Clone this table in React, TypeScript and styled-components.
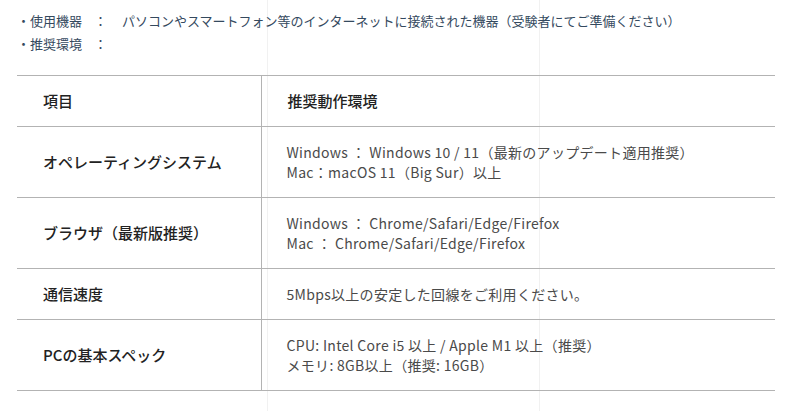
import styled, { createGlobalStyle } from "styled-components";

const GlobalStyle = createGlobalStyle`
    html, body {
        margin: 0;
        padding: 0;
    }

    body {
        font-family: "Noto Sans CJK JP", "Noto Sans", sans-serif;
        background-color: #fff;
        background-image:
            linear-gradient(#f1f1f1, #f1f1f1),
            linear-gradient(#f1f1f1, #f1f1f1);
        background-size: 1px 100%, 1px 100%;
        background-position: 267px 0, 539px 0;
        background-repeat: no-repeat;
        min-height: 411px;
    }
`

interface Spec {
    label: string;
    lines: string[];
}

const requirements = [
    { label: "・使用機器", value: "パソコンやスマートフォン等のインターネットに接続された機器（受験者にてご準備ください）" },
    { label: "・推奨環境", value: "" },
]

const specs: Spec[] = [
    {
        label: "オペレーティングシステム",
        lines: ["Windows ： Windows 10 / 11（最新のアップデート適用推奨）", "Mac：macOS 11（Big Sur）以上"],
    },
    {
        label: "ブラウザ（最新版推奨）",
        lines: ["Windows ： Chrome/Safari/Edge/Firefox", "Mac ： Chrome/Safari/Edge/Firefox"],
    },
    {
        label: "通信速度",
        lines: ["5Mbps以上の安定した回線をご利用ください。"],
    },
    {
        label: "PCの基本スペック",
        lines: ["CPU: Intel Core i5 以上 / Apple M1 以上（推奨）", "メモリ: 8GB以上（推奨: 16GB）"],
    },
]

export default function App() {
    return (
        <>
            <GlobalStyle />
            <Page>
                <ReqList>
                    {requirements.map((req) => (
                        <ReqRow key={req.label}>
                            <ReqLabel>{req.label}</ReqLabel>
                            <ReqColon>：</ReqColon>
                            <ReqValue>{req.value}</ReqValue>
                        </ReqRow>
                    ))}
                </ReqList>

                <SpecTable>
                    <colgroup>
                        <col style={{ width: 244 }} />
                        <col />
                    </colgroup>
                    <thead>
                        <tr>
                            <HeadCell>項目</HeadCell>
                            <HeadCell>推奨動作環境</HeadCell>
                        </tr>
                    </thead>
                    <tbody>
                        {specs.map((spec) => (
                            <tr key={spec.label}>
                                <LabelCell>{spec.label}</LabelCell>
                                <ValueCell>
                                    {spec.lines.map((line) => (
                                        <div key={line}>{line}</div>
                                    ))}
                                </ValueCell>
                            </tr>
                        ))}
                    </tbody>
                </SpecTable>
            </Page>
        </>
    )
}

const Page = styled.div`
    padding: 9px 18px 0 17px;
`

const ReqList = styled.div`
    display: flex;
    flex-direction: column;
    color: #34495e;
    font-size: 13px;
    line-height: 23px;
`

const ReqRow = styled.div`
    display: grid;
    grid-template-columns: 77px 28px 1fr;
`

const ReqLabel = styled.span`
    white-space: nowrap;
`

const ReqColon = styled.span``

const ReqValue = styled.span`
    white-space: nowrap;
`

const SpecTable = styled.table`
    margin-top: 20px;
    width: 100%;
    table-layout: fixed;
    border-collapse: collapse;
    border-top: 1px solid #b3b3b3;
    font-size: 15px;
    line-height: 20px;

    & tr {
        border-bottom: 1px solid #b3b3b3;
    }

    & td:first-child,
    & th:first-child {
        border-right: 1px solid #b3b3b3;
    }
`

const HeadCell = styled.th`
    text-align: left;
    font-weight: 500;
    color: #222;
    padding: 15px 25px 15px 26px;
`

const LabelCell = styled.td`
    font-weight: 500;
    color: #222;
    padding: 15px 25px 15px 26px;
    vertical-align: middle;
    white-space: nowrap;
`

const ValueCell = styled.td`
    color: #4a4a4a;
    font-weight: 400;
    font-size: 14px;
    letter-spacing: 0.3px;
    padding: 15px 25px;
    vertical-align: middle;
    white-space: nowrap;
`
